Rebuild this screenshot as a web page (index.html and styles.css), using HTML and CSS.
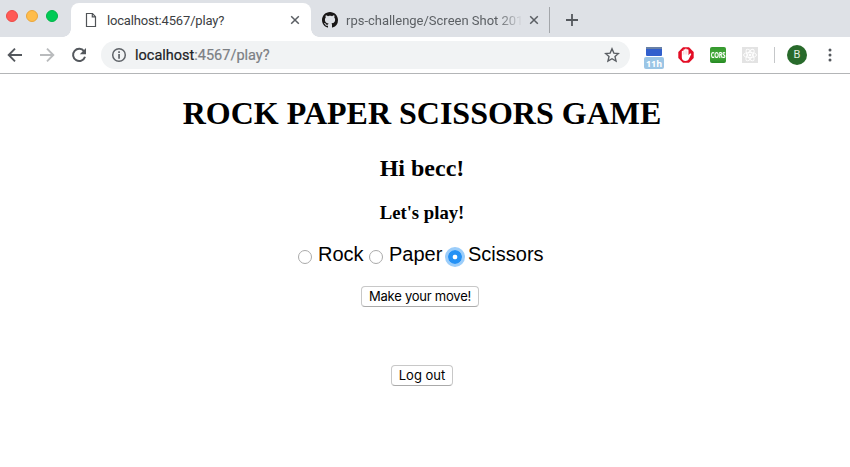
FILE: index.html
```html
<!DOCTYPE html>
<html lang="en">
<head>
<meta charset="utf-8">
<title>Rock Paper Scissors</title>
<link rel="stylesheet" href="styles.css">
</head>
<body>
<header class="tabs">
  <div class="lights"><i class="red"></i><i class="amber"></i><i class="green"></i></div>
  <div class="tab active">
    <svg class="page-icon" width="12" height="16" viewBox="0 0 12 16" fill="none" stroke="#505357" stroke-width="1.2"><path d="M1.5 1.5h6l3 3.2v9.800h-9zM7.300 1.500v3.400h3.200"/></svg>
    <span class="tab-title">localhost:4567/play?</span>
    <svg class="close" width="10" height="10" viewBox="0 0 10 10" stroke="#5a5e63" stroke-width="1.5"><path d="M1.200 1.200l7.600 7.600M8.800 1.200l-7.600 7.600"/></svg>
  </div>
  <div class="tab second">
    <svg width="16" height="16" viewBox="0 0 16 16" fill="#191717"><path d="M8 0C3.580 0 0 3.580 0 8c0 3.540 2.290 6.530 5.470 7.590.4.070.55-.17.55-.38 0-.19-.01-.82-.01-1.490-2.010.37-2.530-.49-2.690-.94-.09-.23-.48-.94-.82-1.130-.28-.15-.68-.52-.01-.53.630-.01 1.080.58 1.230.820.720 1.210 1.870.870 2.330.660.070-.52.280-.87.510-1.070-1.780-.2-3.640-.89-3.640-3.950 0-.87.310-1.590.820-2.150-.08-.2-.36-1.020.080-2.120 0 0 .67-.21 2.200.820.640-.18 1.320-.27 2-.27s1.360.090 2 .27c1.530-1.040 2.200-.82 2.200-.82.440 1.100.160 1.920.080 2.120.510.560.820 1.270.820 2.150 0 3.070-1.870 3.750-3.650 3.950.290.250.540.730.540 1.480 0 1.070-.01 1.930-.01 2.200 0 .210.150.460.550.380A8.010 8.010 0 0 0 16 8c0-4.420-3.580-8-8-8z"/></svg>
    <span class="tab-title faded">rps-challenge/Screen Shot 201</span>
    <svg class="close" width="10" height="10" viewBox="0 0 10 10" stroke="#5a5e63" stroke-width="1.500"><path d="M1.200 1.200l7.600 7.600M8.800 1.200l-7.600 7.600"/></svg>
  </div>
  <svg class="plus" width="14" height="14" viewBox="0 0 14 14" stroke="#54585d" stroke-width="1.800"><path d="M7 1v12M1 7h12"/></svg>
</header>
<nav class="toolbar">
  <svg class="back" width="16" height="16" viewBox="0 0 16 16" fill="none" stroke="#54585d" stroke-width="1.900"><path d="M15 8H2M8 1.700L1.700 8 8 14.300"/></svg>
  <svg class="forward" width="16" height="16" viewBox="0 0 16 16" fill="none" stroke="#b9bbbd" stroke-width="1.900"><path d="M1 8h13M8 1.700L14.300 8 8 14.300"/></svg>
  <svg class="reload" width="16" height="16" viewBox="0 0 16 16"><path d="M13.100 4.300A6.100 6.100 0 1 0 14 9.700" fill="none" stroke="#54585d" stroke-width="2"/><path d="M15 1v6.300H8.800z" fill="#54585d"/></svg>
  <div class="omnibox">
    <svg width="16" height="16" viewBox="0 0 16 16"><circle cx="8" cy="8" r="6.300" fill="none" stroke="#5f6368" stroke-width="1.500"/><path d="M7.200 7h1.700v4.700H7.200zM7.200 4.200h1.700v1.700H7.200z" fill="#5f6368"/></svg>
    <span class="url">localhost<span class="rest">:4567/play?</span></span>
    <svg class="star" width="16" height="16" viewBox="0 0 16 16" fill="none" stroke="#5a5e63" stroke-width="1.400"><path d="M8 1.800l1.850 4.300 4.650.4-3.500 3.050 1.050 4.550L8 11.700l-4.050 2.400L5 9.550 1.500 6.500l4.650-.4z"/></svg>
  </div>
  <div class="timer"><i></i><b>11h</b></div>
  <svg class="adblock" width="16" height="16" viewBox="0 0 16 16"><path d="M5 .3h6L15.700 5v6L11 15.700H5L.3 11V5z" fill="#e30d25"/><path d="M3.800 8.500V4.600a.8.8 0 0 1 1.600 0V3.200a.8.8 0 0 1 1.700 0V2.300a.85.85 0 0 1 1.700 0v.9a.8.8 0 0 1 1.700 0v5l1.200-1.400c.8-.8 1.900-.2 1.400.8l-2.400 4.700c-.7 1.200-1.500 1.700-3.100 1.700-2.500 0-3.800-1.600-3.800-3.800z" fill="#fff"/><path d="M5.400 4.600v3M7.100 3.500v4M8.800 3.500v4" stroke="#efb0b5" stroke-width=".5"/></svg>
  <div class="cors"><span>CORS</span></div>
  <svg class="react" width="16" height="16" viewBox="0 0 16 16" fill="none" stroke="#fff" stroke-width=".9"><path d="M0 0h16v16H0z" fill="#e3e3e3" stroke="none"/><ellipse cx="8" cy="8" rx="6.500" ry="2.600"/><ellipse cx="8" cy="8" rx="6.500" ry="2.600" transform="rotate(60 8 8)"/><ellipse cx="8" cy="8" rx="6.500" ry="2.600" transform="rotate(120 8 8)"/><circle cx="8" cy="8" r="1" fill="#fff"/></svg>
  <i class="divider"></i>
  <div class="avatar">B</div>
  <svg class="menu" width="4" height="14" viewBox="0 0 4 14" fill="#54585d"><circle cx="2" cy="2" r="1.500"/><circle cx="2" cy="7" r="1.500"/><circle cx="2" cy="12" r="1.500"/></svg>
</nav>
<main>
  <h1>ROCK PAPER SCISSORS GAME</h1>
  <h2>Hi becc!</h2>
  <h3>Let's play!</h3>
  <form>
    <div class="choices">
      <label><i class="radio"></i><span class="rock">Rock</span></label>
      <label><i class="radio"></i><span class="paper">Paper</span></label>
      <label><i class="radio checked"></i><span class="scissors">Scissors</span></label>
    </div>
    <button class="move" type="button">Make your move!</button>
  </form>
  <button class="logout" type="button">Log out</button>
</main>
</body>
</html>
```
FILE: styles.css
```css
* { box-sizing: border-box; }
body { margin: 0; height: 467px; overflow: hidden; background: #fff; color: #000; }
svg { display: block; flex: none; }
.tabs { height: 37px; background: #dee1e6; display: flex; padding-top: 3px; font-family: Roboto, sans-serif; font-size: 13px; color: #3c4043; }
.lights { display: flex; gap: 8px; padding: 7px 0 0 6px; width: 71px; flex: none; }
.lights i { width: 12px; height: 12px; border-radius: 50%; }
.red { background: #ff5a56; border: 1px solid #ed4a47; }
.amber { background: #ffbd4c; border: 1px solid #eaa63b; }
.green { background: #00ca56; border: 1px solid #00b548; }
.tab { display: flex; align-items: center; height: 34px; flex: none; }
.active { position: relative; width: 240px; background: #fff; border-radius: 8px 8px 0 0; padding-left: 14px; }
.active::before, .active::after { content: ""; position: absolute; bottom: 0; width: 8px; height: 8px; }
.active::before { left: -8px; background: radial-gradient(circle at 0 0, transparent 7.500px, #fff 8px); }
.active::after { right: -8px; background: radial-gradient(circle at 100% 0, transparent 7.500px, #fff 8px); }
.tab-title { white-space: nowrap; }
.active .tab-title { width: 183px; margin-left: 10px; letter-spacing: -.17px; }
.second { width: 239px; height: 26px; margin-top: 4px; padding-left: 11px; border-right: 1px solid #a3a6aa; color: #5c6064; }
.second .tab-title { width: 176px; margin: 0 7px 0 8px; letter-spacing: -.01px; }
.faded { -webkit-mask-image: linear-gradient(90deg, #000 151px, transparent 177px); mask-image: linear-gradient(90deg, #000 151px, transparent 177px); }
.plus { margin: 10px 0 0 15px; }
.toolbar { height: 37px; display: flex; align-items: center; border-bottom: 1px solid #b3b5b7; padding-left: 7px; font-family: Roboto, sans-serif; }
.forward { margin-left: 16px; }
.reload { margin-left: 16px; }
.omnibox { width: 529px; height: 28px; border-radius: 14px; background: #f1f3f4; margin-left: 14px; padding: 0 10px; display: flex; align-items: center; flex: none; }
.url { margin-left: 8px; font-size: 14.500px; color: #202124; -webkit-text-stroke: .2px; }
.rest { color: #7c8084; }
.star { margin-left: auto; }
.timer { width: 20px; height: 22px; margin-left: 14px; margin-top: 5px; display: flex; flex-direction: column; align-items: center; }
.timer i { width: 16px; height: 9px; background: linear-gradient(#6880a5 0 2px, #315fcd 2px); border-radius: 0 0 1px 1px; }
.timer b { width: 20px; height: 12px; margin-top: 1px; background: #9bc5e5; color: #fff; border-radius: 2px; font: bold 9px/13px "Open Sans", sans-serif; text-align: center; }
.adblock { margin-left: 14px; }
.cors { width: 16px; height: 16px; margin-left: 16px; border-radius: 2px; background: linear-gradient(#35982e, #49ae3e 60%, #258922); color: #fff; font: bold 6px/16px "Open Sans", sans-serif; letter-spacing: -.4px; text-align: center; }
.cors span { display: block; transform: scaleY(1.4); }
.react { margin-left: 16px; }
.divider { width: 1px; height: 16px; background: #c5c7c9; margin-left: 16px; }
.avatar { width: 20px; height: 20px; border-radius: 50%; background: #286a2b; color: #e1efe1; margin-left: 12px; font-size: 11px; line-height: 20px; text-align: center; }
.menu { margin-left: 21px; }
main { width: 844px; display: flex; flex-direction: column; align-items: center; }
h1, h2, h3 { margin: 0; font-family: "Liberation Serif", serif; white-space: nowrap; }
h1 { font-size: 32px; line-height: 38px; margin-top: 20px; }
h2 { font-size: 24px; line-height: 28px; margin-top: 22px; }
h3 { font-size: 18.720px; line-height: 22px; margin-top: 20px; }
form { display: flex; flex-direction: column; align-items: center; }
.choices { display: flex; width: 248px; height: 24px; margin-top: 18px; font: 20px/24px "Liberation Sans", sans-serif; }
label { display: flex; align-items: center; }
.radio { width: 14px; height: 14px; border: 1px solid #aaa; border-radius: 50%; background: #fff; margin-top: 5px; flex: none; }
.rock { margin-left: 6px; width: 51px; }
.paper { margin-left: 6px; width: 59px; }
.checked { border: 0; background: radial-gradient(circle, #fff 2px, #2491f5 2.700px); box-shadow: 0 0 0 3px #9bcdfa; }
.scissors { margin-left: 6px; }
button { height: 21px; padding: 0; border: 1px solid #c8c8c8; border-bottom-color: #aaa; border-radius: 4px; background: #fff; color: #000; font: 13px/19px Inter, sans-serif; white-space: nowrap; }
.move { width: 118px; margin: 20px 4px 0 0; letter-spacing: -.23px; }
.logout { width: 62px; margin-top: 58px; }
```
